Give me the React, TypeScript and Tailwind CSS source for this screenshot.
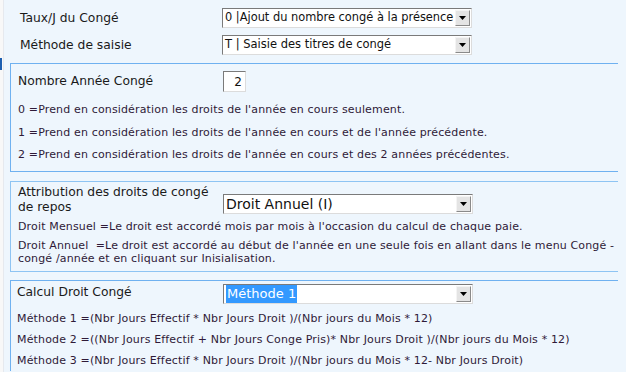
import React from "react"

const font = "font-['DejaVu_Sans',Verdana,sans-serif]"

function FakeSelect({
  text,
  width = 250,
  size = "text-[11.5px]",
  selected = false,
}: {
  text: string
  width?: number
  size?: string
  selected?: boolean
}) {
  return (
    <div
      className="flex h-[20px] shrink-0 items-stretch border border-t-[#7a7a7a] border-l-[#7a7a7a] border-b-[#dcdcdc] border-r-[#dcdcdc] bg-white"
      style={{ width }}
    >
      <div className={`flex min-w-0 flex-1 items-center overflow-hidden whitespace-nowrap pl-[2px] text-[#111] ${size}`}>
        {selected ? (
          <span className="bg-[#3399ff] px-[1px] text-white">{text}</span>
        ) : (
          text
        )}
      </div>
      <div className="my-[1px] mr-[1px] flex w-[15px] shrink-0 items-center justify-center border border-t-[#f4f4f4] border-l-[#f4f4f4] border-b-[#8a8a8a] border-r-[#8a8a8a] bg-[#e4e4e4]">
        <svg width="7" height="4" viewBox="0 0 7 4">
          <path d="M0 0 H7 L3.5 4 Z" fill="#000" />
        </svg>
      </div>
    </div>
  )
}

function Desc({ children, className = "" }: { children: React.ReactNode; className?: string }) {
  return <p className={`whitespace-pre text-[11px] tracking-[0.15px] text-[#2f1a38] ${className}`}>{children}</p>
}

export default function App() {
  return (
    <div className={`flex h-[372px] w-[626px] overflow-hidden bg-[#eef6fd] ${font}`}>
      <div className="w-[4px] shrink-0 border-r border-[#e6e9ee] bg-[#f8f8f8]">
        <div className="mt-[58px] h-[12px] w-[2px] bg-[#1d5fb0]" />
      </div>

      <div className="flex-1 pl-[6px]">
        {/* top rows */}
        <div className="mt-[8px] flex items-center">
          <div className="w-[212px] pl-[10px] text-[12.3px] text-[#1a1a1a]">Taux/J du Congé</div>
          <FakeSelect text="0 |Ajout du nombre congé à la présence" size="text-[11.4px]" />
        </div>
        <div className="mt-[7px] flex items-center">
          <div className="w-[212px] pl-[10px] text-[12.3px] text-[#1a1a1a]">Méthode de saisie</div>
          <FakeSelect text="T | Saisie des titres de congé" />
        </div>

        {/* box 1 */}
        <div className="mt-[8px] w-[608px] border border-r-0 border-[#6fb1f0] pb-[5px] pl-[7px]">
          <div className="mt-[7px] flex h-[21px] items-center">
            <div className="w-[205px] text-[12.3px] text-[#1a1a1a]">Nombre Année Congé</div>
            <div className="flex h-[21px] w-[23px] items-center justify-end border border-t-[#7a7a7a] border-l-[#7a7a7a] border-b-[#dcdcdc] border-r-[#dcdcdc] bg-white pr-[3px] text-[12px] text-[#111]">
              2
            </div>
          </div>
          <div className="mt-[7px] flex flex-col">
            <Desc className="leading-[22px]">0 =Prend en considération les droits de l'année en cours seulement.</Desc>
            <Desc className="leading-[23px]">1 =Prend en considération les droits de l'année en cours et de l'année précédente.</Desc>
            <Desc className="leading-[22px]">2 =Prend en considération les droits de l'année en cours et des 2 années précédentes.</Desc>
          </div>
        </div>

        {/* box 2 */}
        <div className="mt-[9px] w-[608px] border border-r-0 border-[#8ec4f3] pb-[6px] pl-[7px] pt-[3px]">
          <div className="flex items-end">
            <div className="w-[205px] text-[12.3px] leading-[15px] text-[#1a1a1a]">
              Attribution des droits de congé
              <br />
              de repos
            </div>
            <div className="mb-[1px]">
              <FakeSelect text="Droit Annuel (I)" size="text-[14px]" />
            </div>
          </div>
          <Desc className="mt-[5px] leading-[14px]">Droit Mensuel =Le droit est accordé mois par mois à l'occasion du calcul de chaque paie.</Desc>
          <Desc className="mt-[5px] leading-[13px]">
            {"Droit Annuel  =Le droit est accordé au début de l'année en une seule fois en allant dans le menu Congé -"}
            <br />
            {"congé /année et en cliquant sur Inisialisation."}
          </Desc>
        </div>

        {/* box 3 */}
        <div className="mt-[8px] w-[608px] border border-b-0 border-r-0 border-[#6fb1f0] pl-[6px] pt-[3px]">
          <div className="flex items-start">
            <div className="w-[206px] text-[12.3px] leading-[16px] text-[#1a1a1a]">Calcul Droit Congé</div>
            <FakeSelect text="Méthode 1" size="text-[13px]" selected />
          </div>
          <div className="mt-[4px] flex flex-col">
            <Desc className="leading-[21px]">{"Méthode 1 =(Nbr Jours Effectif * Nbr Jours Droit )/(Nbr jours du Mois * 12)"}</Desc>
            <Desc className="leading-[21px]">{"Méthode 2 =((Nbr Jours Effectif + Nbr Jours Conge Pris)* Nbr Jours Droit )/(Nbr jours du Mois * 12)"}</Desc>
            <Desc className="leading-[21px]">{"Méthode 3 =(Nbr Jours Effectif * Nbr Jours Droit )/(Nbr jours du Mois * 12- Nbr Jours Droit)"}</Desc>
          </div>
        </div>
      </div>
    </div>
  )
}
